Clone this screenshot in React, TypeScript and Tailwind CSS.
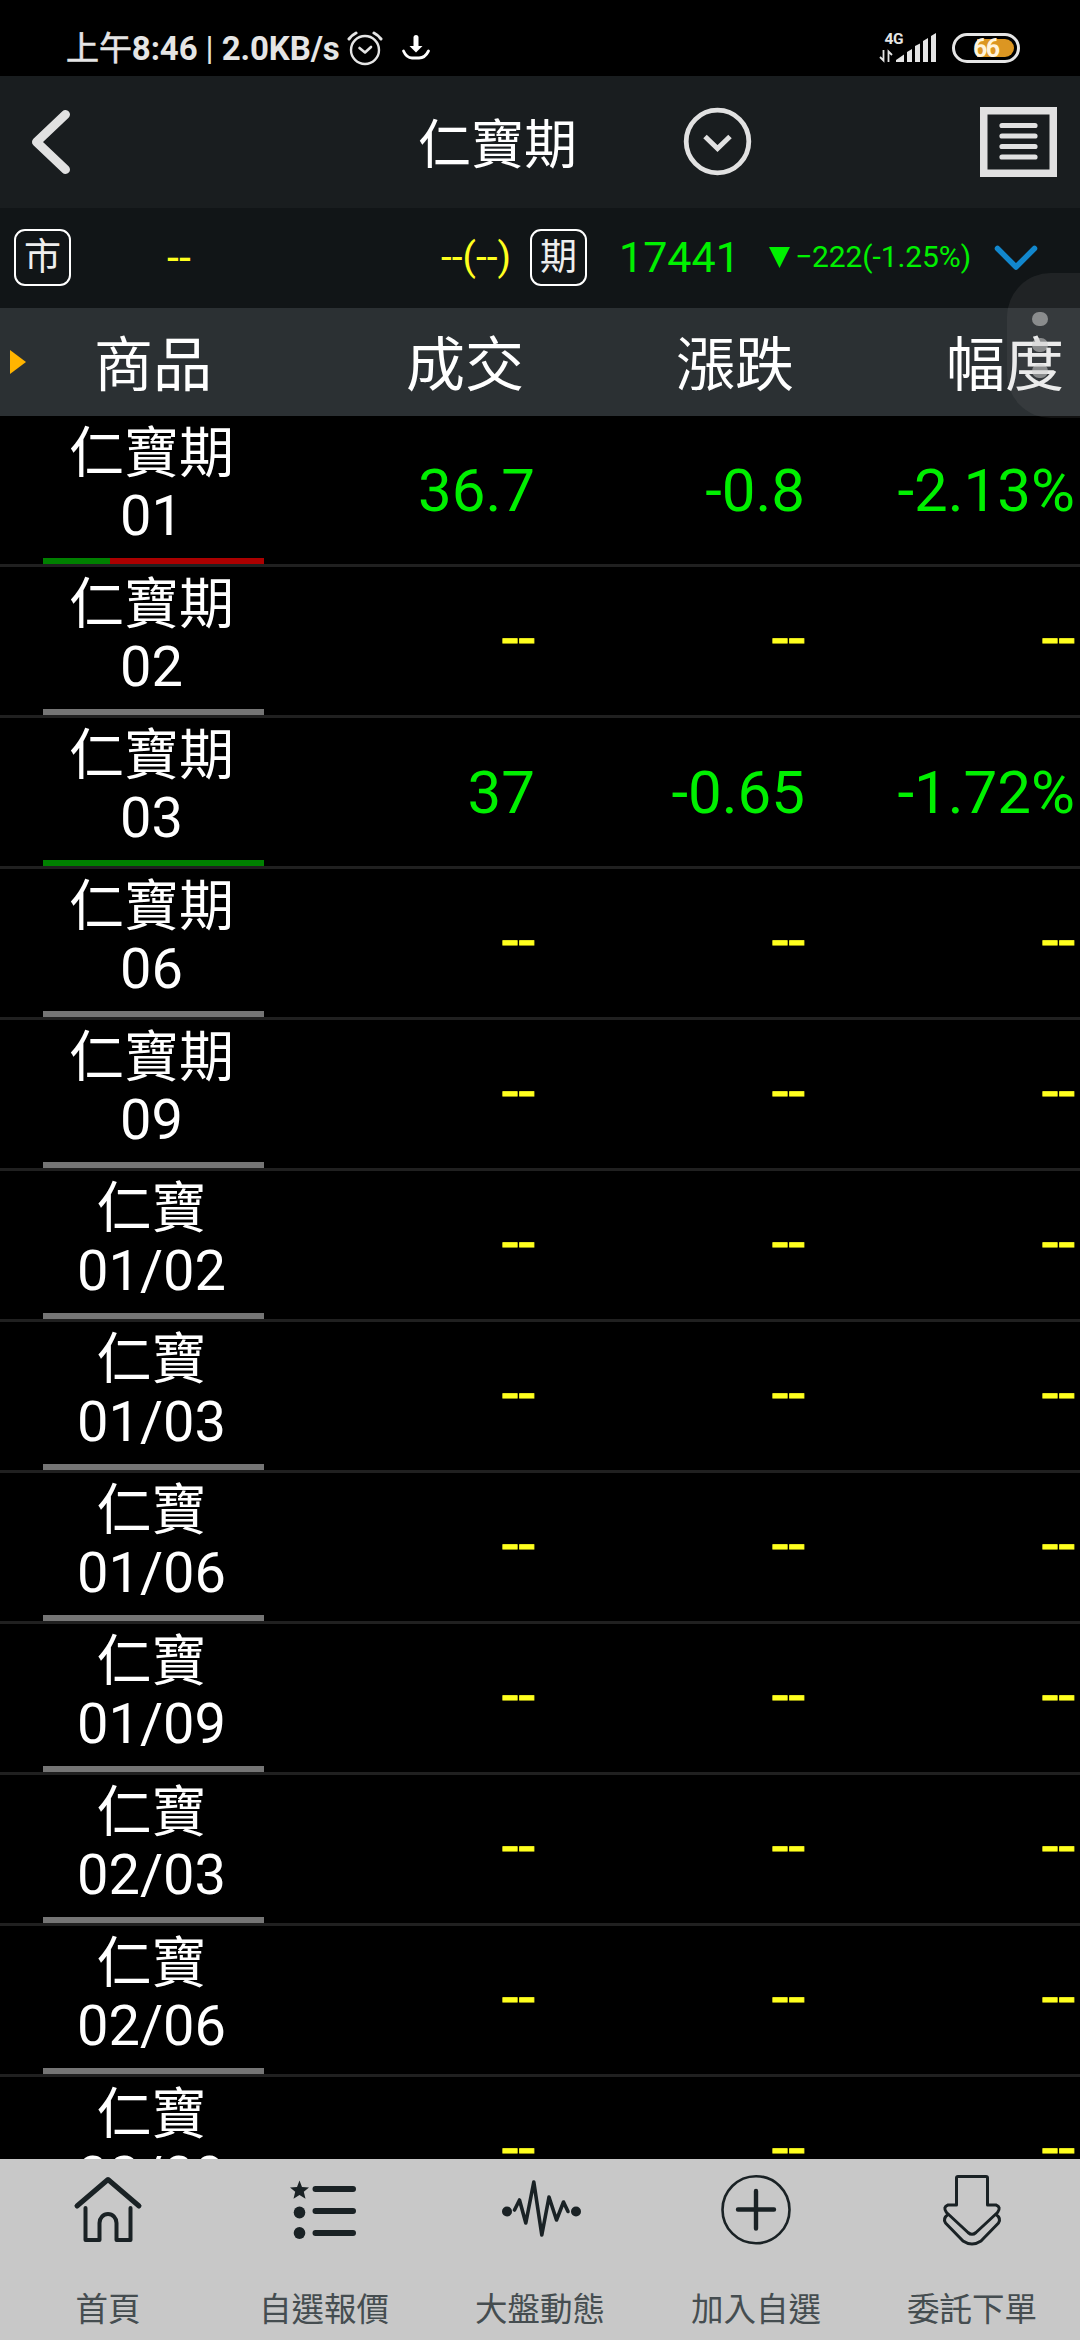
import React from "react";

type Row = {
  name: string;
  month: string;
  price?: string;
  change?: string;
  percent?: string;
  bar: "mixed" | "green" | "gray";
};

const rows: Row[] = [
  { name: "仁寶期", month: "01", price: "36.7", change: "-0.8", percent: "-2.13%", bar: "mixed" },
  { name: "仁寶期", month: "02", bar: "gray" },
  { name: "仁寶期", month: "03", price: "37", change: "-0.65", percent: "-1.72%", bar: "green" },
  { name: "仁寶期", month: "06", bar: "gray" },
  { name: "仁寶期", month: "09", bar: "gray" },
  { name: "仁寶", month: "01/02", bar: "gray" },
  { name: "仁寶", month: "01/03", bar: "gray" },
  { name: "仁寶", month: "01/06", bar: "gray" },
  { name: "仁寶", month: "01/09", bar: "gray" },
  { name: "仁寶", month: "02/03", bar: "gray" },
  { name: "仁寶", month: "02/06", bar: "gray" },
  { name: "仁寶", month: "02/09", bar: "gray" },
];

function StatusBar() {
  return (
    <div className="flex h-[76px] shrink-0 items-start bg-black text-[#e5e5e5]">
      <div className="ml-[66px] mt-[29px] w-[280px] text-[33px] font-bold leading-[40px] tracking-[-0.1px] whitespace-nowrap">
        <span className="font-normal [-webkit-text-stroke:0.6px_#e5e5e5]">上午</span>8:46<span className="font-normal"> | </span>2.0KB/s
      </div>
      <svg className="mt-[30px] ml-px h-[36px] w-[36px]" viewBox="0 0 36 36" fill="none" stroke="#e5e5e5">
        <circle cx="18" cy="20" r="14" strokeWidth="2.4" />
        <path d="M12.5 18 L18 22.5 L24 17" strokeWidth="2.6" strokeLinecap="round" strokeLinejoin="round" />
        <path d="M2 9 Q5 5 9 3 M34 9 Q31 5 27 3" strokeWidth="3" strokeLinecap="round" />
      </svg>
      <svg className="mt-[34px] ml-[18px] h-[28px] w-[30px]" viewBox="0 0 30 28" fill="none" stroke="#ffffff">
        <path d="M2.5 17 Q5.5 24 11 24 H18 Q24 24 27.5 17" strokeWidth="2.8" strokeLinecap="round" />
        <path d="M15 3.5 V13" strokeWidth="5" strokeLinecap="round" />
        <path d="M8.5 12 H21.5 L15 18.5 Z" fill="#ffffff" stroke="none" />
      </svg>
      <div className="ml-auto mt-[31px] flex">
        <svg className="h-[33px] w-[58px]" viewBox="0 0 58 33" fill="#e5e5e5">
          <text x="5.5" y="12.5" fontSize="15.5" fontWeight="700" fontFamily="Roboto" textLength="19">4G</text>
          <path d="M1 26 L4.5 29.5 V19 M9.5 31 V20.5 L13 24" stroke="#e5e5e5" strokeWidth="1.8" fill="none" />
          <path d="M17 31 V29 L25 23.5 V31 Z M28 31 V21 L33 18 V31 Z M36 31 V15 L41 12.5 V31 Z M44 31 V10 L49 7 V31 Z M52 31 V5 L57 2 V31 Z" />
        </svg>
        <div className="relative ml-[15px] mt-[2px] mr-[60px] h-[30px] w-[68px] rounded-full border-[3px] border-[#e5e5e5]">
          <div className="absolute top-[3px] right-[3px] h-[18px] w-[37px] rounded-r-full bg-[#dc9622]" />
          <span className="absolute top-0 left-[18px] text-[25px] font-bold leading-[25px] tracking-[-1.5px] text-[#fff3dd]">66</span>
        </div>
      </div>
    </div>
  );
}

function TitleBar() {
  return (
    <div className="flex h-[132px] shrink-0 items-start bg-[#191d1f]">
      <svg className="mt-[32px] ml-[30px] h-[68px] w-[42px]" viewBox="0 0 42 68" fill="none">
        <path d="M35.5 6.5 L6.5 34 L35.5 61.5" stroke="#e1e1e1" strokeWidth="9" strokeLinecap="round" strokeLinejoin="round" />
      </svg>
      <div className="mt-[38px] ml-[346px] w-[169px] text-[53px] leading-[64px] text-white whitespace-nowrap">仁寶期</div>
      <svg className="mt-[31px] ml-[96px] h-[69px] w-[69px]" viewBox="0 0 69 69" fill="none" stroke="#e1e1e1">
        <circle cx="34.5" cy="34.5" r="31.3" strokeWidth="4.8" />
        <path d="M22 29.5 L34.5 41.5 L47 29.5" strokeWidth="5" />
      </svg>
      <svg className="mt-[31px] ml-auto mr-[23px] h-[70px] w-[77px]" viewBox="0 0 77 70" fill="none" stroke="#e1e1e1">
        <rect x="3.75" y="3.75" width="69.5" height="62.5" strokeWidth="7.5" />
        <path d="M22 18.5 H55 M22 29 H55 M22 39.5 H55 M22 50 H55" strokeWidth="5.2" strokeLinecap="round" />
      </svg>
    </div>
  );
}

function Tag({ children }: { children: string }) {
  return (
    <div className="flex h-[57px] w-[57px] shrink-0 items-center justify-center rounded-[11px] border-[2.5px] border-white text-[37px] leading-[37px] text-[#eeeeee]">
      {children}
    </div>
  );
}

function IndexBar() {
  return (
    <div className="flex h-[100px] shrink-0 items-center bg-[#111517] pb-[1px] text-[#00f000]">
      <div className="ml-[14px]"><Tag>市</Tag></div>
      <div className="ml-[96px] w-[24px] pb-[2px] text-[43px] leading-[50px] text-[#ffff1e]">--</div>
      <div className="ml-[250px] w-[80px] pb-[1px] text-[39px] leading-[46px] text-[#ffff1e] whitespace-nowrap">--(--)</div>
      <div className="ml-[9px]"><Tag>期</Tag></div>
      <div className="ml-[32px] w-[124px] pb-[1px] text-[43px] leading-[50px]">17441</div>
      <svg className="ml-[26px] h-[21px] w-[21px]" viewBox="0 0 21 21"><path d="M0 0 H21 L10.5 21 Z" fill="#00f000" /></svg>
      <div className="ml-[5px] w-[180px] pb-[1px] text-[30px] leading-[36px] tracking-[-0.1px] whitespace-nowrap">−222(-1.25%)</div>
      <svg className="ml-[19px] h-[26px] w-[44px]" viewBox="0 0 44 26" fill="none">
        <path d="M3.5 3.5 L22 22 L40.5 3.5" stroke="#1287cd" strokeWidth="5.5" strokeLinecap="round" strokeLinejoin="round" />
      </svg>
    </div>
  );
}

function TableHead() {
  return (
    <div className="flex h-[108px] shrink-0 items-center bg-[#2b3033] text-[59px] leading-[70px] text-white">
      <svg className="ml-[10px] h-[24px] w-[16px] shrink-0" viewBox="0 0 16 24"><path d="M0 0 L16 12 L0 24 Z" fill="#ffb400" /></svg>
      <div className="w-[244px] pt-[7px] pl-[68px]">商品</div>
      <div className="w-[270px] pt-[7px] pr-[16px] text-right">成交</div>
      <div className="w-[270px] pt-[7px] pr-[16px] text-right">漲跌</div>
      <div className="w-[270px] pt-[7px] pr-[16px] text-right">幅度</div>
    </div>
  );
}

function Value({ children }: { children?: string }) {
  return (
    <div
      className={
        "w-[270px] pr-[5px] text-right text-[60px] leading-[70px] " +
        (children ? "pt-[1px] text-[#00f000]" : "pb-[4px] text-[#ffff1e] [-webkit-text-stroke:0.8px_#ffff1e]")
      }
    >
      {children ?? "--"}
    </div>
  );
}

function QuoteRow({ row }: { row: Row }) {
  return (
    <div className="flex h-[151px] shrink-0 items-center border-b-[3px] border-[#202020]">
      <div className="flex h-full w-[270px] flex-col pl-[43px]">
        <div className="flex h-[142px] w-[221px] flex-col items-center pr-[4px] pt-[5px] text-[55px] leading-[64px] text-white">
          <span>{row.name}</span>
          <span className="-mt-px text-[56px]">{row.month}</span>
        </div>
        <div className="flex h-[6px] w-[221px] bg-[#757575]">
          {row.bar === "mixed" && (
            <>
              <div className="w-[67px] bg-[#008000]" />
              <div className="flex-1 bg-[#ab0000]" />
            </>
          )}
          {row.bar === "green" && <div className="w-full bg-[#008000]" />}
        </div>
      </div>
      <Value>{row.price}</Value>
      <Value>{row.change}</Value>
      <Value>{row.percent}</Value>
    </div>
  );
}

function HomeIcon() {
  return (
    <>
      <path d="M5 36 L36 9.5 L67 36" strokeWidth="5" />
      <path d="M13.5 38 V70 H27.5 V53 A8.5 9 0 0 1 44.5 53 V70 H58.5 V38" strokeWidth="4" />
    </>
  );
}

function ListIcon() {
  return (
    <>
      <path d="M27.5 19 H65 M27.5 41 H65 M27.5 63 H65" strokeWidth="6" />
      <ellipse cx="11.5" cy="42.5" rx="5.8" ry="5.9" fill="#1a2225" stroke="none" />
      <ellipse cx="11.5" cy="63" rx="5.8" ry="5.9" fill="#1a2225" stroke="none" />
      <path d="M11.5 10.5 L14 17 L21 17.5 L15.8 21.8 L17.5 28.7 L11.5 25 L5.5 28.7 L7.2 21.8 L2 17.5 L9 17 Z" fill="#1a2225" stroke="none" />
    </>
  );
}

function PulseIcon() {
  return (
    <>
      <circle cx="3" cy="41.5" r="5" fill="#1a2225" stroke="none" />
      <circle cx="72" cy="41.5" r="5" fill="#1a2225" stroke="none" />
      <path d="M10.5 40 L15.5 30 L21.8 53 L29.8 12 L37.8 65 L45 27 L52.5 50 L59.5 32 L64 41.5" strokeWidth="3.6" />
    </>
  );
}

function AddIcon() {
  return (
    <>
      <circle cx="36" cy="39.7" r="33.5" strokeWidth="2.6" />
      <path d="M18 39.5 H54 M36 21 V58.5" strokeWidth="4.4" />
    </>
  );
}

function OrderIcon() {
  return (
    <>
      <path d="M20.5 35 V8 Q20.5 6.5 22 6.5 H50 Q51.5 6.5 51.5 8 V35 H60 Q65.5 37 61.5 42.5 L40 62.5 Q36 66 32 62.5 L10.5 42.5 Q6.5 37 12 35 Z" strokeWidth="3" />
      <path d="M12 44.5 Q6.5 48.5 9.5 53 L27 71 Q36 77 45 71 L62.5 53 Q65.5 48.5 60 44.5" strokeWidth="3" />
    </>
  );
}

const navItems = [
  { label: "首頁", Icon: HomeIcon },
  { label: "自選報價", Icon: ListIcon },
  { label: "大盤動態", Icon: PulseIcon },
  { label: "加入自選", Icon: AddIcon },
  { label: "委託下單", Icon: OrderIcon },
];

function BottomNav() {
  return (
    <nav className="grid h-[181px] shrink-0 grid-cols-5 bg-[#c8c8c8]">
      {navItems.map(({ label, Icon }) => (
        <div key={label} className="flex flex-col items-center pt-[11px]">
          <svg className="h-[80px] w-[72px] overflow-visible" viewBox="0 0 72 80" fill="none" stroke="#1a2225" strokeLinecap="round" strokeLinejoin="round">
            <Icon />
          </svg>
          <span className="mt-[40px] text-[32.5px] leading-[40px] text-[#454d50]">{label}</span>
        </div>
      ))}
    </nav>
  );
}

export default function App() {
  return (
    <div
      lang="zh-Hant"
      className="relative flex h-[2340px] w-[1080px] flex-col overflow-hidden bg-black font-[Roboto,'Noto_Sans_CJK_TC',sans-serif]"
    >
      <StatusBar />
      <TitleBar />
      <IndexBar />
      <TableHead />
      <main className="min-h-0 flex-1 overflow-hidden">
        {rows.map((row) => (
          <QuoteRow key={row.month} row={row} />
        ))}
      </main>
      <BottomNav />
      <div className="absolute top-[273px] right-0 flex h-[145px] w-[73px] flex-col items-center gap-[12px] rounded-l-[44px] bg-[#767676]/15 pt-[39px] pr-[8px]">
        <div className="h-[14px] w-[16px] rounded-full bg-[#d0d0d0]/55" />
        <div className="h-[14px] w-[16px] rounded-full bg-[#d0d0d0]/55" />
        <div className="h-[14px] w-[16px] rounded-full bg-[#d0d0d0]/55" />
      </div>
    </div>
  );
}
